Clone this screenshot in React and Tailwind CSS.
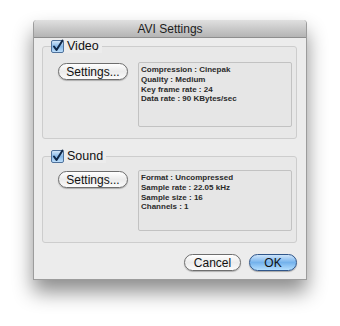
import React from 'react';

const font = { fontFamily: '"Liberation Sans", Arial, sans-serif' };

const Checkbox = () => (
    <svg width="13" height="13" viewBox="0 0 13 13" className="shrink-0 overflow-visible">
        <defs>
            <linearGradient id="cb" x1="0" y1="0" x2="0" y2="1">
                <stop offset="0" stopColor="#d9ebfb" />
                <stop offset="0.5" stopColor="#86b8e8" />
                <stop offset="1" stopColor="#c2e2fd" />
            </linearGradient>
        </defs>
        <rect x="0.5" y="0.5" width="12" height="12" rx="1.5" fill="url(#cb)" stroke="#4f719a" />
        <path d="M3 6.5 L5.5 10 L11.5 0.5" fill="none" stroke="#0f2747" strokeWidth="2" strokeLinecap="round" strokeLinejoin="round" />
    </svg>
);

const PillButton = ({ children, width, primary }) => (
    <div
        className={`flex items-center justify-center h-[17px] rounded-full border text-[12px] leading-none text-[#111] ${width} ${
            primary
                ? 'border-[#30568a] bg-gradient-to-b from-[#cde4fa] via-[#74b2ec] to-[#b3defe] shadow-[0_1px_1px_rgba(0,0,0,0.3)]'
                : 'border-[#6e6e6e] bg-gradient-to-b from-[#ffffff] via-[#ebebeb] to-[#fbfbfb] shadow-[0_1px_1px_rgba(0,0,0,0.25)]'
        }`}
    >
        {children}
    </div>
);

const Group = ({ label, lines, height, infoTop, infoHeight, btnTop }) => (
    <div className={`relative border border-[#cdcdcd] rounded-[3px] bg-[#e8e8e8] ${height}`}>
        {/* legend over the border */}
        <div className="absolute left-[8px] -top-[7px] flex items-center gap-[3px] bg-[#ececec] pr-[3px]">
            <Checkbox />
            <span className="text-[12.5px] leading-none text-[#111]">{label}</span>
        </div>
        <div className="flex pl-[15px]">
            <div className={btnTop}>
                <PillButton width="w-[70px]">Settings...</PillButton>
            </div>
            <div
                className={`ml-[10px] w-[154px] border border-[#c2c2c2] rounded-[2px] bg-[#e6e6e6] px-[2px] pt-[2px] text-[8px] leading-[9.8px] text-[#2a2a2a] font-bold ${infoTop} ${infoHeight}`}
            >
                {lines.map(line => (
                    <div key={line}>{line}</div>
                ))}
            </div>
        </div>
    </div>
);

const App = () => {
    return (
        <div className="w-[340px] h-[326px] bg-white pt-[20px] pl-[33px]" style={font}>
            <div className="w-[274px] h-[260px] flex flex-col bg-[#ececec] rounded-t-[4px] border-x border-b border-[#9c9c9c] shadow-[0_12px_20px_rgba(0,0,0,0.45)]">
                {/* Title bar */}
                <div className="h-[18px] shrink-0 flex items-center justify-center rounded-t-[4px] bg-gradient-to-b from-[#e0e0e0] to-[#b4b4b4] border-b border-[#8e8e8e] text-[12px] text-[#1c1c1c]">
                    AVI Settings
                </div>

                <div className="flex flex-col pl-[8px] pr-[9px] pt-[8px]">
                    <Group
                        label="Video"
                        height="h-[93px]"
                        btnTop="mt-[16px]"
                        infoTop="mt-[15px]"
                        infoHeight="h-[65px]"
                        lines={[
                            'Compression : Cinepak',
                            'Quality : Medium',
                            'Key frame rate : 24',
                            'Data rate : 90 KBytes/sec',
                        ]}
                    />
                    <div className="h-[17px]" />
                    <Group
                        label="Sound"
                        height="h-[87px]"
                        btnTop="mt-[14px]"
                        infoTop="mt-[13px]"
                        infoHeight="h-[61px]"
                        lines={[
                            'Format : Uncompressed',
                            'Sample rate : 22.05 kHz',
                            'Sample size : 16',
                            'Channels : 1',
                        ]}
                    />

                    {/* Footer buttons */}
                    <div className="flex justify-end gap-[8px] mt-[11px]">
                        <PillButton width="w-[57px]">Cancel</PillButton>
                        <PillButton width="w-[48px]" primary>OK</PillButton>
                    </div>
                </div>
            </div>
        </div>
    );
};

export default App;
